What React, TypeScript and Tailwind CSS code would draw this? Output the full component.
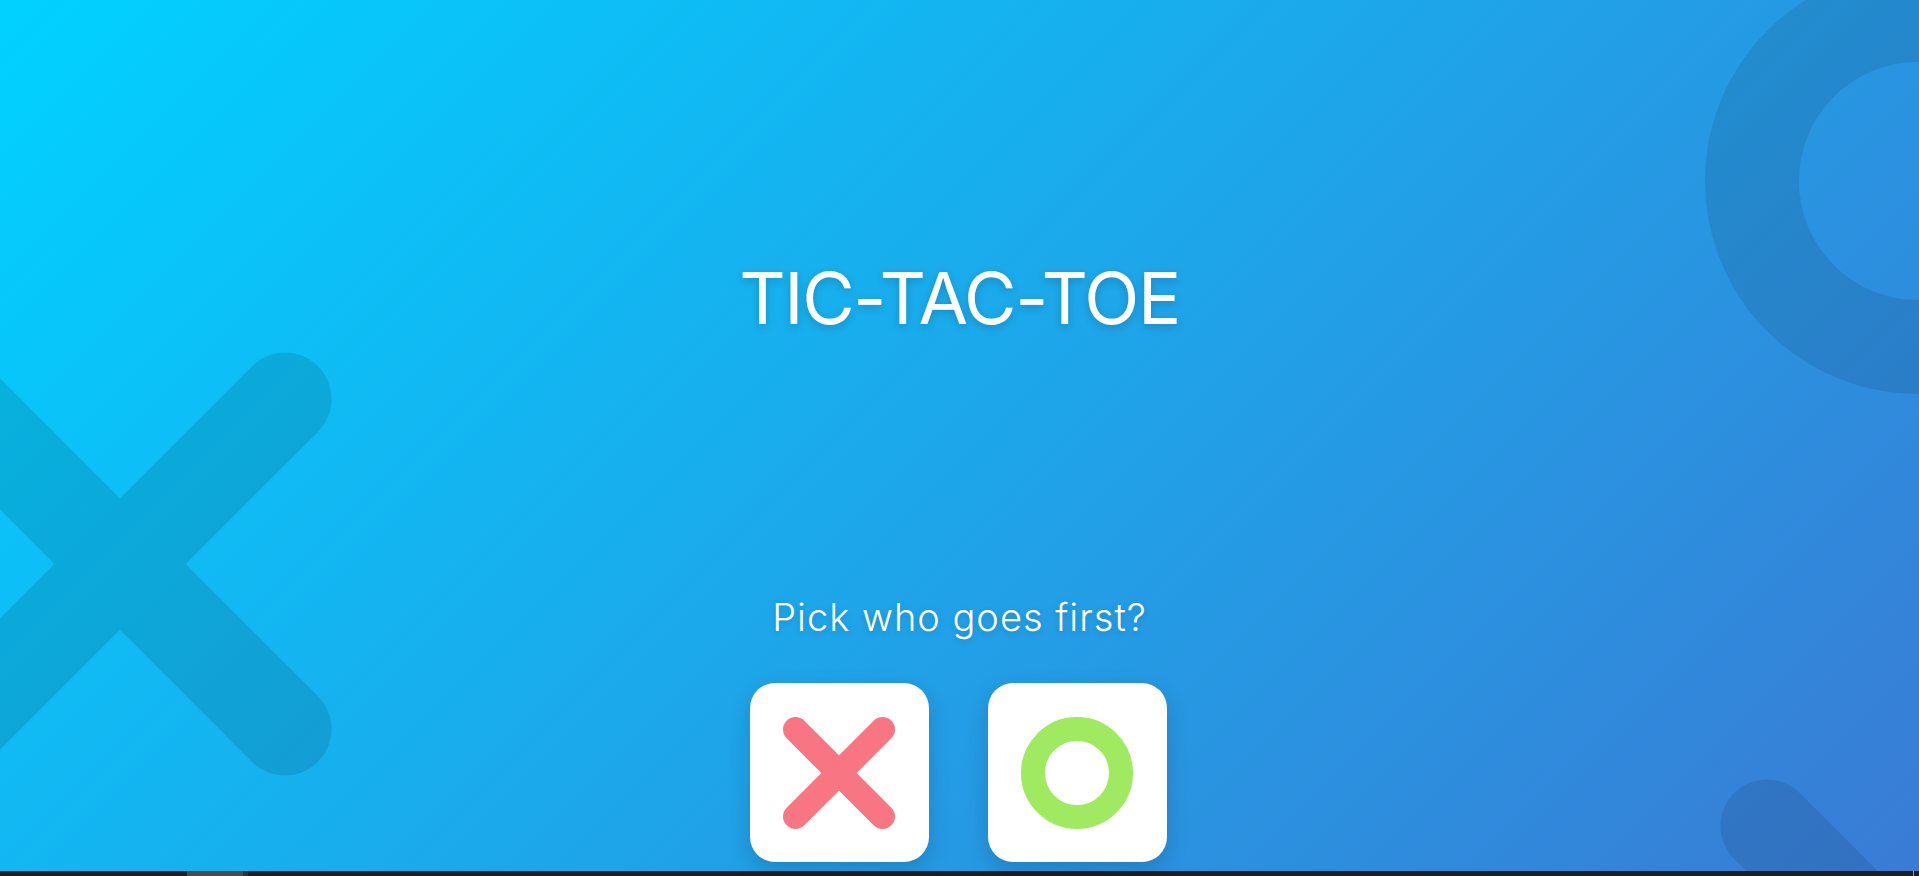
import React from "react";

function XMark({ size = 112, stroke = 25, color = "#f87584" }: { size?: number; stroke?: number; color?: string }) {
  const p = stroke / 2;
  return (
    <svg width={size} height={size} viewBox={`0 0 ${size} ${size}`}>
      <g stroke={color} strokeWidth={stroke} strokeLinecap="round">
        <line x1={p} y1={p} x2={size - p} y2={size - p} />
        <line x1={size - p} y1={p} x2={p} y2={size - p} />
      </g>
    </svg>
  );
}

function OMark({ size = 112, stroke = 24, color = "#a0ea62" }: { size?: number; stroke?: number; color?: string }) {
  return (
    <svg width={size} height={size} viewBox={`0 0 ${size} ${size}`}>
      <circle cx={size / 2} cy={size / 2} r={(size - stroke) / 2} fill="none" stroke={color} strokeWidth={stroke} />
    </svg>
  );
}

function Backdrop() {
  return (
    <svg
      className="absolute inset-0 pointer-events-none"
      width="1919"
      height="871"
      viewBox="0 0 1919 871"
    >
      <g opacity="0.1" stroke="#000" strokeWidth="93" strokeLinecap="round" fill="none">
        <line x1="-45" y1="399" x2="285" y2="729" />
        <line x1="-45" y1="729" x2="285" y2="399" />
      </g>
      <g opacity="0.09" stroke="#000" strokeWidth="94" fill="none">
        <circle cx="1918" cy="181" r="166" />
      </g>
      <g opacity="0.09" stroke="#000" strokeWidth="93" strokeLinecap="round" fill="none">
        <line x1="1767" y1="826" x2="2097" y2="1156" />
        <line x1="1767" y1="1156" x2="2097" y2="826" />
      </g>
    </svg>
  );
}

export default function App() {
  return (
    <div className="w-[1919px] h-[876px] overflow-hidden flex flex-col [font-family:Inter,'Open_Sans',sans-serif]">
      <div className="relative h-[871px] bg-[linear-gradient(135deg,#00d2ff,#3a7bd5)] flex flex-col items-center">
        <Backdrop />
        <h1 className="relative mt-[262px] text-[72px] leading-none font-normal text-white tracking-[-1.5px] [text-shadow:0_3px_8px_rgba(0,0,0,0.18)]">
          TIC-TAC-TOE
        </h1>
        <p className="relative mt-[264px] text-[38px] leading-none font-light text-white tracking-[1px] [text-shadow:0_2px_6px_rgba(0,0,0,0.15)]">
          Pick who goes first?
        </p>
        <div className="relative mt-[47px] mr-[3px] flex gap-[59px]">
          <button className="w-[179px] h-[179px] rounded-[25px] bg-white flex items-center justify-center shadow-[0_8px_22px_rgba(0,0,0,0.16)]">
            <XMark />
          </button>
          <button className="w-[179px] h-[179px] rounded-[25px] bg-white flex items-center justify-center shadow-[0_8px_22px_rgba(0,0,0,0.16)]">
            <OMark />
          </button>
        </div>
      </div>
      <div className="h-[5px] flex bg-[#1f1f1f]">
        <div className="ml-[187px] w-[56px] bg-[#4b4b4b]" />
        <div className="w-[5px] bg-[#333333]" />
        <div className="flex-1" />
        <div className="w-px bg-[#9a9a9a]" />
        <div className="w-[5px]" />
      </div>
    </div>
  );
}
